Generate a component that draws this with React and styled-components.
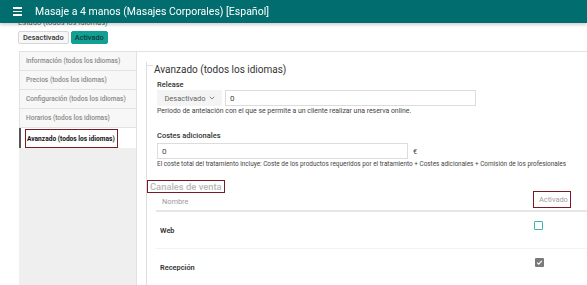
import React from "react";
import styled, { createGlobalStyle } from "styled-components";

const Global = createGlobalStyle`
  html, body { margin: 0; padding: 0; background: #fff; }
  body { font-family: Roboto, "Liberation Sans", sans-serif; color: #333; overflow: hidden; }
  * { box-sizing: border-box; }
`;

const Header = styled.header`
  position: fixed;
  top: 0; left: 0; right: 0;
  height: 23px;
  background: #016d6e;
  box-shadow: 0 2px 3px rgba(0,0,0,0.18);
  display: flex;
  align-items: center;
  padding-left: 13px;
  gap: 13px;
  z-index: 10;
`;

const Burger = styled.div`
  width: 9px;
  display: flex;
  flex-direction: column;
  gap: 2px;
  span { display: block; height: 1.5px; background: #fff; }
`;

const Title = styled.h1`
  margin: 0;
  color: #fff;
  font-size: 10.5px;
  font-weight: 400;
  white-space: nowrap;
`;

const Status = styled.div`
  padding: 18px 0 0 18px;
`;

const StatusLabel = styled.div`
  font-size: 7.5px;
  color: #555;
  line-height: 10px;
`;

const Toggle = styled.div`
  display: flex;
  gap: 2px;
  margin-top: 3px;
`;

const ToggleBtn = styled.div`
  height: 13px;
  padding: 0 ${p => (p.$on ? 3 : 4)}px;
  font-size: 7.4px;
  line-height: 11px;
  border: 1px solid ${p => (p.$on ? "#12a095" : "#d6d6d6")};
  background: ${p => (p.$on ? "#12a095" : "#f7f7f7")};
  color: ${p => (p.$on ? "#073f3b" : "#333")};
  border-radius: 2px;
  font-weight: 500;
`;

const Main = styled.div`
  display: flex;
  margin-top: 7px;
  height: 240px;
`;

const Tabs = styled.nav`
  width: 118px;
  flex-shrink: 0;
  margin-left: 19px;
  display: flex;
  flex-direction: column;
  border-top: 1px solid #e2e2e2;
  border-right: 1px solid #e2e2e2;
`;

const Tab = styled.div`
  height: 19px;
  display: flex;
  align-items: center;
  padding-left: 6px;
  font-size: 6.6px;
  font-weight: 500;
  color: #8a8a8a;
  background: #f7f7f7;
  border-left: 1px solid #e2e2e2;
  border-bottom: 1px solid #e2e2e2;
  white-space: nowrap;
`;

const ActiveTab = styled.div`
  height: 20px;
  display: flex;
  align-items: stretch;
  background: #fff;
  border-left: 2px solid #555;
  padding: 1px 0 0 4px;
`;

const Highlight = styled.span`
  border: 1.5px solid #7a1a22;
  display: inline-flex;
  align-items: center;
  padding: 0 2px 0 1px;
  font-size: 6.6px;
  font-weight: 700;
  color: #111;
  white-space: nowrap;
`;

const TabFill = styled.div`
  flex: 1;
  background: #efefef;
`;

const Panel = styled.section`
  flex: 1;
  min-width: 0;
  border-top: 1px solid #e2e2e2;
  padding: 10px 0 0 9px;
  display: flex;
  flex-direction: column;
`;

const Fieldset = styled.div`
  flex: 1;
  min-width: 0;
  border-left: 1px solid #dedede;
  display: flex;
  flex-direction: column;
`;

const LegendRow = styled.div`
  display: flex;
  align-items: flex-start;
  height: 14px;
  margin-left: -1px;
  &::before {
    content: "";
    width: 7px;
    margin-top: 3px;
    border-top: 1px solid #dedede;
  }
`;

const Legend = styled.div`
  font-size: 10px;
  line-height: 14px;
  color: #333;
  padding: 0 1px;
  margin-top: 1px;
`;

const Content = styled.div`
  padding-left: 10px;
  min-width: 0;
  display: flex;
  flex-direction: column;
`;

const Label = styled.div`
  font-size: 7.5px;
  line-height: 10px;
  font-weight: 500;
  color: #333;
  margin-top: ${p => p.$mt || 0}px;
`;

const FieldRow = styled.div`
  display: flex;
  align-items: center;
  gap: ${p => p.$gap || 3}px;
  margin-top: ${p => p.$mt || 0}px;
`;

const Select = styled.div`
  width: 65px;
  height: 16px;
  background: #f4f4f4;
  color: #666;
  font-size: 7.5px;
  display: flex;
  align-items: center;
  justify-content: center;
  gap: 3px;
`;

const Input = styled.div`
  width: ${p => p.$w}px;
  height: 16px;
  border: 1px solid #dcdcdc;
  font-size: 8px;
  color: #444;
  display: flex;
  align-items: center;
  padding-left: 4px;
`;

const Suffix = styled.span`
  font-size: 7.5px;
  color: #444;
`;

const Help = styled.div`
  font-size: ${p => p.$fs || 6.9}px;
  line-height: 10px;
  color: #444;
  white-space: nowrap;
`;

const SectionTitle = styled.div`
  align-self: flex-start;
  margin: 11px 0 0 -10px;
  border: 1.5px solid #7a1a22;
  height: 13px;
  padding: 0 2px 0 2px;
  font-size: 9.4px;
  line-height: 10px;
  font-weight: 500;
  color: #b8b8b8;
  display: flex;
  align-items: center;
`;

const Table = styled.div`
  margin-left: -1px;
  display: flex;
  flex-direction: column;
`;

const Row = styled.div`
  display: grid;
  grid-template-columns: 1fr 58px;
  align-items: center;
  height: ${p => p.$h}px;
  border-bottom: ${p => p.$head ? "2px solid #e6e6e6" : "1px solid #f3f3f3"};
`;

const Cell = styled.div`
  padding-left: ${p => p.$pl || 5}px;
  font-size: 7.4px;
  font-weight: ${p => (p.$bold ? 600 : 400)};
  color: ${p => (p.$head ? "#9a9a9a" : "#333")};
  white-space: nowrap;
  display: flex;
  align-items: center;
`;

const HeadBox = styled.span`
  border: 1.5px solid #7a1a22;
  height: 17px;
  padding: 0 2px 0 5px;
  margin-left: -1px;
  margin-top: -4px;
  display: inline-flex;
  align-items: center;
  color: #a0a0a0;
  font-size: 7.4px;
`;

const Check = styled.span`
  width: 9px;
  height: 9px;
  border: ${p => (p.$checked ? "none" : "1.5px solid #3bb5ad")};
  background: ${p => (p.$checked ? "#7a7a7a" : "#fff")};
  border-radius: 1px;
  display: inline-flex;
  align-items: center;
  justify-content: center;
  margin-top: -10px;
`;

export default function App() {
  return (
    <>
      <Global />
      <Header>
        <Burger><span /><span /><span /></Burger>
        <Title>Masaje a 4 manos (Masajes Corporales) [Español]</Title>
      </Header>
      <Status>
        <StatusLabel>Estado (todos los idiomas)</StatusLabel>
        <Toggle>
          <ToggleBtn>Desactivado</ToggleBtn>
          <ToggleBtn $on>Activado</ToggleBtn>
        </Toggle>
      </Status>
      <Main>
        <Tabs>
          <Tab>Información (todos los idiomas)</Tab>
          <Tab>Precios (todos los idiomas)</Tab>
          <Tab>Configuración (todos los idiomas)</Tab>
          <Tab>Horarios (todos los idiomas)</Tab>
          <ActiveTab><Highlight>Avanzado (todos los idiomas)</Highlight></ActiveTab>
          <TabFill />
        </Tabs>
        <Panel>
          <Fieldset>
            <LegendRow><Legend>Avanzado (todos los idiomas)</Legend></LegendRow>
            <Content>
              <Label $mt={4}>Release</Label>
              <FieldRow>
                <Select>
                  Desactivado
                  <svg width="6" height="4" viewBox="0 0 6 4"><path d="M0.8 0.8 L3 3 L5.2 0.8" fill="none" stroke="#777" strokeWidth="0.9" /></svg>
                </Select>
                <Input $w={251}>0</Input>
              </FieldRow>
              <Help>Periodo de antelación con el que se permite a un cliente realizar una reserva online.</Help>
              <Label $mt={15}>Costes adicionales</Label>
              <FieldRow $mt={2} $gap={5}>
                <Input $w={251}>0</Input>
                <Suffix>€</Suffix>
              </FieldRow>
              <Help $fs={6.4}>El coste total del tratamiento incluye: Coste de los productos requeridos por el tratamiento + Costes adicionales + Comisión de los profesionales</Help>
              <SectionTitle>Canales de venta</SectionTitle>
              <Table>
                <Row $h={19} $head>
                  <Cell $head $pl={6}>Nombre</Cell>
                  <Cell $head $pl={0}><HeadBox>Activado</HeadBox></Cell>
                </Row>
                <Row $h={37}>
                  <Cell $bold $pl={4}>Web</Cell>
                  <Cell $pl={5}><Check /></Cell>
                </Row>
                <Row $h={37}>
                  <Cell $bold $pl={4}>Recepción</Cell>
                  <Cell $pl={6}>
                    <Check $checked>
                      <svg width="7" height="7" viewBox="0 0 7 7"><path d="M1.2 3.6 L2.8 5.2 L5.8 1.8" fill="none" stroke="#fff" strokeWidth="1.2" /></svg>
                    </Check>
                  </Cell>
                </Row>
              </Table>
            </Content>
          </Fieldset>
        </Panel>
      </Main>
    </>
  );
}
